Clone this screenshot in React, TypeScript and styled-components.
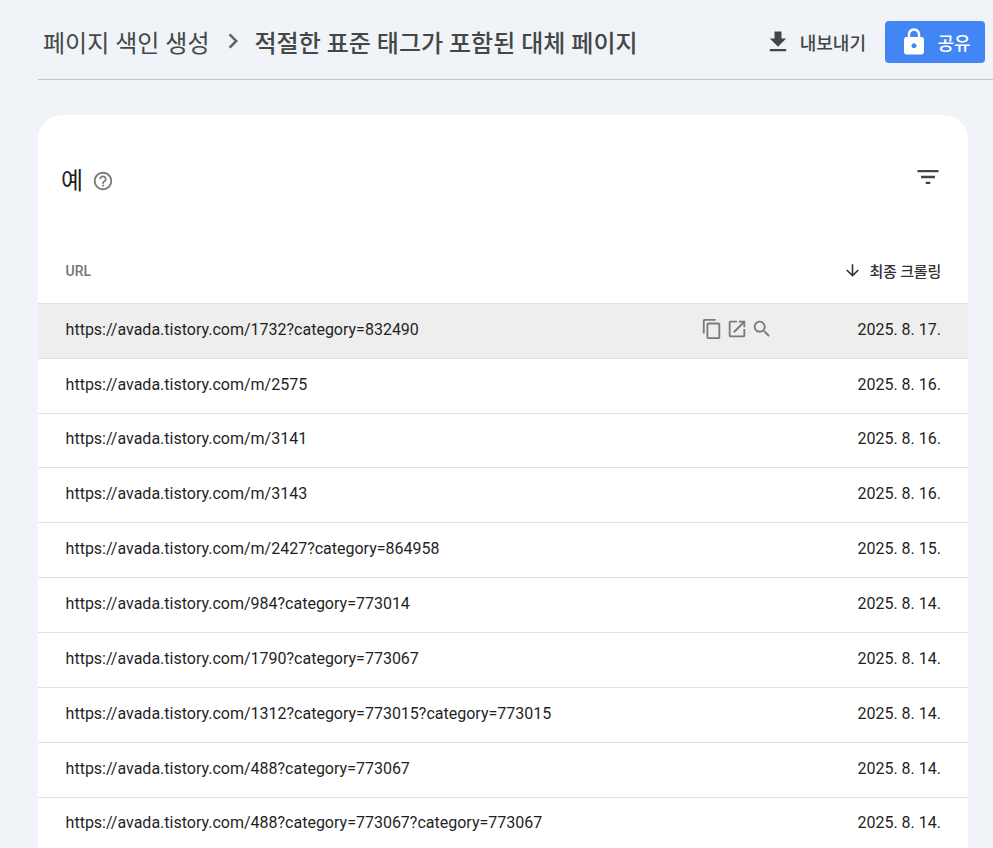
import styled, { createGlobalStyle } from 'styled-components';

const GlobalStyle = createGlobalStyle`
  html, body {
    margin: 0;
    height: 848px;
    overflow: hidden;
    background: #f0f3f8;
    font-family: Roboto, "Noto Sans CJK KR", sans-serif;
  }
`;

const Page = styled.div`
  padding-left: 38px;
`;

const Header = styled.header`
  height: 74px;
  display: flex;
  align-items: center;
  padding: 5px 8px 0 5px;
  border-bottom: 1px solid #c4c7c9;
`;

const Crumbs = styled.div`
  flex: 1;
  display: flex;
  align-items: center;
  padding-bottom: 2px;
  color: #444746;
`;

const CrumbLink = styled.span`
  font-size: 24px;
`;

const CrumbCurrent = styled.span`
  font-size: 24px;
  font-weight: 500;
`;

const CrumbArrow = styled.svg`
  width: 30px;
  height: 30px;
  margin: 0 6.5px 0 8.5px;
  fill: #5f6368;
`;

const ExportButton = styled.div`
  display: flex;
  align-items: center;
  gap: 8px;
  font-size: 18px;
  font-weight: 500;
  color: #444746;
  margin-right: 19px;
`;

const ShareButton = styled.div`
  width: 100px;
  height: 42px;
  border-radius: 4px;
  background: #4285f4;
  color: #fff;
  font-size: 18px;
  font-weight: 500;
  display: flex;
  align-items: center;
  justify-content: center;
  gap: 8px;
`;

const Icon = styled.svg<{ $size: number; $color: string }>`
  width: ${({ $size }) => $size}px;
  height: ${({ $size }) => $size}px;
  fill: ${({ $color }) => $color};
  flex: none;
`;

const FilterIcon = styled(Icon)`
  margin-bottom: 8px;
`;

const Card = styled.section`
  margin: 35px 25px 0 0;
  background: #fff;
  border-radius: 24px 24px 0 0;
`;

const CardTitleRow = styled.div`
  height: 132px;
  padding: 0 26px 0 23px;
  display: flex;
  align-items: center;
  justify-content: space-between;
`;

const CardTitle = styled.h2`
  margin: 0;
  display: flex;
  align-items: center;
  gap: 9px;
  font-size: 24px;
  font-weight: 400;
  color: #1f1f1f;
`;

const TitleText = styled.span`
  margin-bottom: 5px;
`;

const TableHead = styled.div`
  height: 56.9px;
  padding: 0 27px 8px 27.6px;
  box-sizing: border-box;
  display: flex;
  align-items: center;
  justify-content: space-between;
  border-bottom: 1px solid #e0e0e0;
`;

const UrlHead = styled.span`
  font-size: 14px;
  font-weight: 500;
  color: #757575;
`;

const DateHead = styled.span`
  display: flex;
  align-items: center;
  gap: 7px;
  font-size: 15px;
  letter-spacing: -0.2px;
  font-weight: 500;
  color: #303134;
`;

const Row = styled.div<{ $active?: boolean }>`
  height: 54.86px;
  box-sizing: border-box;
  padding: 0 27px 3.25px 27.6px;
  display: flex;
  align-items: center;
  border-bottom: 1px solid #e0e0e0;
  background: ${({ $active }) => ($active ? '#eeeeee' : '#fff')};
  font-size: 16px;
  color: #1f1f1f;
`;

const UrlCell = styled.span`
  flex: 1;
`;

const Actions = styled.div`
  display: flex;
  align-items: center;
  gap: 3px;
  margin-right: 84px;
`;

const DateCell = styled.span`
  width: 84px;
  text-align: right;
`;

const rows = [
  ['https://avada.tistory.com/1732?category=832490', '2025. 8. 17.'],
  ['https://avada.tistory.com/m/2575', '2025. 8. 16.'],
  ['https://avada.tistory.com/m/3141', '2025. 8. 16.'],
  ['https://avada.tistory.com/m/3143', '2025. 8. 16.'],
  ['https://avada.tistory.com/m/2427?category=864958', '2025. 8. 15.'],
  ['https://avada.tistory.com/984?category=773014', '2025. 8. 14.'],
  ['https://avada.tistory.com/1790?category=773067', '2025. 8. 14.'],
  ['https://avada.tistory.com/1312?category=773015?category=773015', '2025. 8. 14.'],
  ['https://avada.tistory.com/488?category=773067', '2025. 8. 14.'],
  ['https://avada.tistory.com/488?category=773067?category=773067', '2025. 8. 14.'],
];

export default function App() {
  return (
    <Page>
      <GlobalStyle />
      <Header>
        <Crumbs>
          <CrumbLink>페이지 색인 생성</CrumbLink>
          <CrumbArrow viewBox="0 0 24 24">
            <path d="M10 6L8.59 7.41 13.17 12l-4.58 4.59L10 18l6-6z" />
          </CrumbArrow>
          <CrumbCurrent>적절한 표준 태그가 포함된 대체 페이지</CrumbCurrent>
        </Crumbs>
        <ExportButton>
          <Icon $size={28} $color="#444746" viewBox="0 0 24 24">
            <path d="M19 9h-4V3H9v6H5l7 7 7-7zM5 18v2h14v-2H5z" />
          </Icon>
          내보내기
        </ExportButton>
        <ShareButton>
          <Icon $size={30} $color="#fff" viewBox="0 0 24 24">
            <path d="M18 8h-1V6c0-2.76-2.24-5-5-5S7 3.24 7 6v2H6c-1.1 0-2 .9-2 2v10c0 1.1.9 2 2 2h12c1.1 0 2-.9 2-2V10c0-1.1-.9-2-2-2zm-6 9c-1.1 0-2-.9-2-2s.9-2 2-2 2 .9 2 2-.9 2-2 2zm3.1-9H8.9V6c0-1.71 1.39-3.1 3.1-3.1 1.71 0 3.1 1.39 3.1 3.1v2z" />
          </Icon>
          공유
        </ShareButton>
      </Header>
      <Card>
        <CardTitleRow>
          <CardTitle>
            <TitleText>예</TitleText>
            <Icon $size={22} $color="#7a7a7a" viewBox="0 0 24 24">
              <path d="M11 18h2v-2h-2v2zm1-16C6.48 2 2 6.48 2 12s4.48 10 10 10 10-4.48 10-10S17.52 2 12 2zm0 18c-4.41 0-8-3.59-8-8s3.59-8 8-8 8 3.59 8 8-3.59 8-8 8zm0-14c-2.21 0-4 1.79-4 4h2c0-1.1.9-2 2-2s2 .9 2 2c0 2-3 1.75-3 5h2c0-2.25 3-2.5 3-5 0-2.21-1.79-4-4-4z" />
            </Icon>
          </CardTitle>
          <FilterIcon $size={28} $color="#444746" viewBox="0 0 24 24">
            <path d="M10 18h4v-2h-4v2zM3 6v2h18V6H3zm3 7h12v-2H6v2z" />
          </FilterIcon>
        </CardTitleRow>
        <TableHead>
          <UrlHead>URL</UrlHead>
          <DateHead>
            <Icon $size={19} $color="#303134" viewBox="0 0 24 24">
              <path d="M20 12l-1.41-1.41L13 16.17V4h-2v12.17l-5.58-5.59L4 12l8 8 8-8z" />
            </Icon>
            최종 크롤링
          </DateHead>
        </TableHead>
        {rows.map(([url, date], i) => (
          <Row key={url} $active={i === 0}>
            <UrlCell>{url}</UrlCell>
            {i === 0 && (
              <Actions>
                <Icon $size={22} $color="#7a7a7a" viewBox="0 0 24 24">
                  <path d="M16 1H4c-1.1 0-2 .9-2 2v14h2V3h12V1zm3 4H8c-1.1 0-2 .9-2 2v14c0 1.1.9 2 2 2h11c1.1 0 2-.9 2-2V7c0-1.1-.9-2-2-2zm0 16H8V7h11v14z" />
                </Icon>
                <Icon $size={22} $color="#7a7a7a" viewBox="0 0 24 24">
                  <path d="M19 19H5V5h7V3H5c-1.11 0-2 .9-2 2v14c0 1.1.89 2 2 2h14c1.1 0 2-.9 2-2v-7h-2v7zM14 3v2h3.59l-9.83 9.83 1.41 1.41L19 6.41V10h2V3h-7z" />
                </Icon>
                <Icon $size={22} $color="#7a7a7a" viewBox="0 0 24 24">
                  <path d="M15.5 14h-.79l-.28-.27C15.41 12.59 16 11.11 16 9.5 16 5.91 13.09 3 9.5 3S3 5.91 3 9.5 5.91 16 9.5 16c1.61 0 3.09-.59 4.23-1.57l.27.28v.79l5 4.99L20.49 19l-4.99-5zm-6 0C7.01 14 5 11.99 5 9.5S7.01 5 9.5 5 14 7.01 14 9.5 11.99 14 9.5 14z" />
                </Icon>
              </Actions>
            )}
            <DateCell>{date}</DateCell>
          </Row>
        ))}
      </Card>
    </Page>
  );
}
